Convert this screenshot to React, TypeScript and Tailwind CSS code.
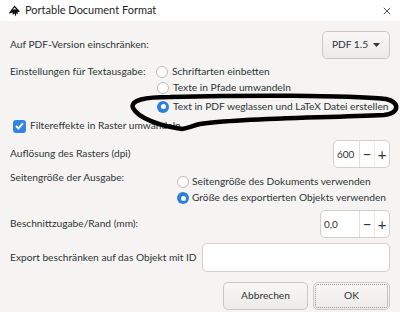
import { X } from "lucide-react";

const font = { fontFamily: "Lato, 'Noto Sans', sans-serif" };

const Radio = ({ checked }: { checked?: boolean }) =>
  checked ? (
    <span className="w-[12px] h-[12px] rounded-full bg-[#2f7fdc] flex items-center justify-center shrink-0">
      <span className="w-[5px] h-[5px] rounded-full bg-white" />
    </span>
  ) : (
    <span className="w-[12px] h-[12px] rounded-full bg-white border border-[#bdbab7] shrink-0" />
  );

const Spin = ({ value, width }: { value: string; width: string }) => (
  <div className={`${width} h-full flex bg-white border border-[#d3cec9] rounded-[5px] text-[#2e3436]`}>
    <div className="flex-1 flex items-center pl-[3px] text-[10px]">{value}</div>
    <div className="w-[15px] border-l border-[#e2deda] flex items-center justify-center text-[15px] leading-none">−</div>
    <div className="w-[15px] border-l border-[#eeebe8] flex items-center justify-center text-[15px] leading-none">+</div>
  </div>
);

export default function App() {
  return (
    <div
      className="relative w-[400px] h-[312px] overflow-hidden bg-[#f5f4f2] text-[10.2px] text-[#2e3436] whitespace-nowrap"
      style={font}
    >
      {/* title bar */}
      <div className="h-[21px] bg-white flex items-center pl-[8px] pr-[7px]">
        <svg width="13" height="12" viewBox="0 0 13 12" className="shrink-0">
          <path
            d="M6.5 0.5 L11.5 6 C12 6.6 11.4 7.2 10.6 7 L9.6 6.8 L10 9.5 L8.6 8 L7.6 11.5 L6.4 8.6 L4.8 10 L4.6 7.6 L2 8.4 C1.2 8.6 0.8 7.8 1.4 7.2 Z"
            fill="#111"
          />
          <path d="M6.5 2.6 L8.4 4.6 L6.5 4.2 L4.6 4.6 Z" fill="#fff" />
        </svg>
        <span className="ml-[4px] text-[11px] text-[#1f1f1f]">Portable Document Format</span>
        <X className="ml-auto w-[12px] h-[12px] text-[#222]" strokeWidth={1.5} />
      </div>

      <div className="px-[10px] flex flex-col">
        {/* PDF version */}
        <div className="mt-[10px] h-[28px] flex items-center">
          <span>Auf PDF-Version einschränken:</span>
          <div className="ml-auto w-[68px] h-full flex items-center justify-center gap-[5px] rounded-[5px] border border-[#cdc7c2] bg-gradient-to-b from-[#f8f7f6] to-[#edebe9]">
            <span>PDF 1.5</span>
            <svg width="7" height="4" viewBox="0 0 7 4">
              <path d="M0 0 H7 L3.5 4 Z" fill="#2e3436" />
            </svg>
          </div>
        </div>

        {/* text output */}
        <div className="flex">
          <span className="w-[146px] shrink-0 mt-[5px] h-[15px] flex items-center">Einstellungen für Textausgabe:</span>
          <div className="flex flex-col">
            <div className="mt-[5px] h-[15px] flex items-center gap-[4px]">
              <Radio />
              <span>Schriftarten einbetten</span>
            </div>
            <div className="mt-[1px] h-[15px] flex items-center gap-[4px] pl-[1px]">
              <Radio />
              <span>Texte in Pfade umwandeln</span>
            </div>
            <div className="mt-[4px] h-[15px] flex items-center gap-[4px] pl-[1px]">
              <Radio checked />
              <span>Text in PDF weglassen und LaTeX Datei erstellen</span>
            </div>
          </div>
        </div>

        {/* filter checkbox */}
        <div className="mt-[5px] h-[14px] flex items-center gap-[4px] pl-[3px]">
          <span className="w-[13px] h-[13px] rounded-[3px] bg-[#3584e4] flex items-center justify-center">
            <svg width="9" height="8" viewBox="0 0 9 8">
              <path d="M1 4 L3.5 6.5 L8 1.2" stroke="#fff" strokeWidth="1.8" fill="none" />
            </svg>
          </span>
          <span>Filtereffekte in Raster umwandeln</span>
        </div>

        {/* raster dpi */}
        <div className="mt-[7px] h-[28px] flex items-center">
          <span>Auflösung des Rasters (dpi)</span>
          <div className="ml-auto h-full">
            <Spin value="600" width="w-[57px]" />
          </div>
        </div>

        {/* page size */}
        <div className="mt-[7px] flex">
          <span className="w-[167px] shrink-0 -mt-[4px] h-[14px] flex items-center">Seitengröße der Ausgabe:</span>
          <div className="flex flex-col gap-[2px]">
            <div className="h-[14px] flex items-center gap-[3px]">
              <Radio />
              <span>Seitengröße des Dokuments verwenden</span>
            </div>
            <div className="h-[14px] flex items-center gap-[3px]">
              <Radio checked />
              <span>Größe des exportierten Objekts verwenden</span>
            </div>
          </div>
        </div>

        {/* bleed */}
        <div className="mt-[5px] h-[28px] flex items-center">
          <span>Beschnittzugabe/Rand (mm):</span>
          <div className="ml-auto h-full">
            <Spin value="0,0" width="w-[70px]" />
          </div>
        </div>

        {/* export id */}
        <div className="mt-[5px] h-[29px] flex items-center gap-[7px]">
          <span className="w-[185px] shrink-0">Export beschränken auf das Objekt mit ID</span>
          <div className="flex-1 h-full bg-white border border-[#d3cec9] rounded-[5px]" />
        </div>

        {/* buttons */}
        <div className="mt-[10px] h-[28px] flex justify-end gap-[5px]">
          <div className="w-[85px] h-full flex items-center justify-center rounded-[5px] border border-[#cdc7c2] bg-gradient-to-b from-[#f8f7f6] to-[#edebe9]">
            Abbrechen
          </div>
          <div className="w-[77px] h-full flex items-center justify-center rounded-[5px] border border-[#cdc7c2] bg-gradient-to-b from-[#f8f7f6] to-[#edebe9] outline-1 outline-dotted outline-[#9a9692] outline-offset-[-3px]">
            OK
          </div>
        </div>
      </div>

      {/* hand-drawn marker around the LaTeX option */}
      <svg className="absolute left-0 top-0 pointer-events-none" width="400" height="312" viewBox="0 0 400 312">
        <path
          d="M182 129 C160 126 138 118 133 108 C130 100 145 97 170 97 C250 95 345 95 386 99 C400 102 400 113 384 115 C320 118 240 118 200 124 C192 126 188 128 182 129"
          stroke="#000"
          strokeWidth="4.5"
          fill="none"
          strokeLinecap="round"
          strokeLinejoin="round"
        />
      </svg>
    </div>
  );
}
